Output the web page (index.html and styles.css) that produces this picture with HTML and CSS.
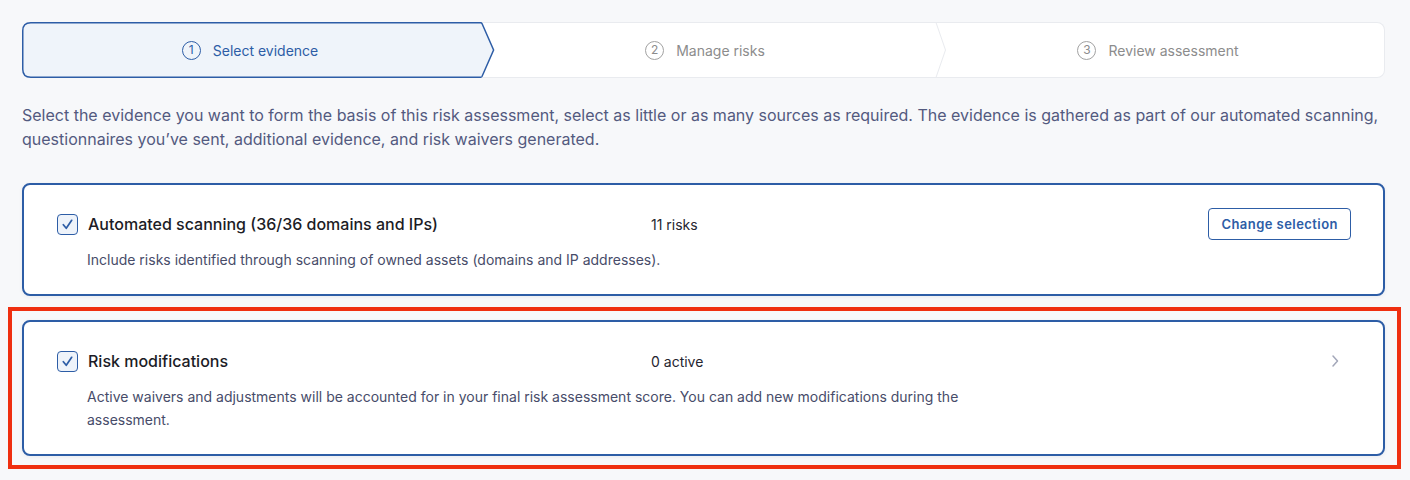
FILE: index.html
```html
<!DOCTYPE html>
<html lang="en">
<head>
    <meta charset="UTF-8">
    <meta name="viewport" content="width=device-width, initial-scale=1.0">
    <title>Risk assessment - Select evidence</title>
    <link rel="stylesheet" href="styles.css">
</head>
<body>
    <!-- Stepper -->
    <div class="stepper">
        <div class="step step-active">
            <svg class="step-shape" viewBox="0 0 459 56" preserveAspectRatio="none">
                <path d="M8.75 0.75 H458.6 Q459.6 0.75 460.1 1.8 L471.6 28 L460.1 54.2 Q459.6 55.25 458.6 55.25 H8.75 Q0.75 55.25 0.75 47.25 V8.75 Q0.75 0.75 8.75 0.75 Z" fill="#eff4fa" stroke="#2d5da6" stroke-width="1.5"/>
            </svg>
            <span class="step-num">1</span>
            <span class="step-label">Select evidence</span>
        </div>
        <div class="step step-mid">
            <svg class="step-shape" viewBox="0 0 455 56" preserveAspectRatio="none">
                <path d="M-14 0.5 H455 L464.5 28 L455 55.5 H-14 Z" fill="#ffffff"/>
                <path d="M-14 0.5 H455 L464.5 28 L455 55.5 H-14" fill="none" stroke="#e9ebef" stroke-width="1"/>
            </svg>
            <span class="step-num">2</span>
            <span class="step-label">Manage risks</span>
        </div>
        <div class="step step-last">
            <span class="step-num">3</span>
            <span class="step-label">Review assessment</span>
        </div>
    </div>

    <p class="intro">
        Select the evidence you want to form the basis of this risk assessment, select as little or as many sources as required. The evidence is gathered as part of our automated scanning, questionnaires you’ve sent, additional evidence, and risk waivers generated.
    </p>

    <!-- Evidence sources -->
    <div class="source-card">
        <div class="source-row">
            <div class="source-title">
                <span class="checkbox">
                    <svg viewBox="0 0 20 20"><path d="M5.6 10.2 L8.7 14 L14.4 5.6" fill="none" stroke="#2d5da6" stroke-width="1.8" stroke-linecap="round" stroke-linejoin="round"/></svg>
                </span>
                Automated scanning (36/36 domains and IPs)
            </div>
            <div class="source-count">11 risks</div>
            <button class="btn-outline">Change selection</button>
        </div>
        <p class="source-desc">Include risks identified through scanning of owned assets (domains and IP addresses).</p>
    </div>

    <div class="highlight">
        <div class="source-card">
            <div class="source-row">
                <div class="source-title">
                    <span class="checkbox">
                        <svg viewBox="0 0 20 20"><path d="M5.6 10.2 L8.7 14 L14.4 5.6" fill="none" stroke="#2d5da6" stroke-width="1.8" stroke-linecap="round" stroke-linejoin="round"/></svg>
                    </span>
                    Risk modifications
                </div>
                <div class="source-count">0 active</div>
                <span class="chevron">
                    <svg viewBox="0 0 24 24"><path d="M10 7 L14.5 12 L10 17" fill="none" stroke="#a3a7b9" stroke-width="1.5" stroke-linecap="round" stroke-linejoin="round"/></svg>
                </span>
            </div>
            <p class="source-desc narrow">Active waivers and adjustments will be accounted for in your final risk assessment score. You can add new modifications during the assessment.</p>
        </div>
    </div>
</body>
</html>
```

FILE: styles.css
```css
/* Reset */
* {
    margin: 0;
    padding: 0;
    box-sizing: border-box;
}

body {
    font-family: Inter, 'Noto Sans', sans-serif;
    background-color: #f7f8fa;
    color: #1d1d27;
    padding: 22px 25px 0 22px;
}

/* Stepper */
.stepper {
    display: flex;
    height: 56px;
}

.step {
    position: relative;
    display: flex;
    align-items: center;
    justify-content: center;
    gap: 12px;
    font-size: 14px;
    color: #8c8c8c;
}

.step-active {
    flex: 0 0 459px;
    padding-right: 3px;
    color: #2d5da6;
    z-index: 3;
}

.step-mid {
    flex: 0 0 455px;
    padding-right: 7px;
    z-index: 2;
}

.step-last {
    flex: 1;
    background: #fff;
    border: 1px solid #e9ebef;
    border-left: none;
    border-radius: 0 8px 8px 0;
    padding-right: 4px;
    z-index: 1;
}

/* arrow shape drawn under the label */
.step-shape {
    position: absolute;
    top: 0;
    left: 0;
    width: 100%;
    height: 100%;
    overflow: visible;
    z-index: -1;
}

.step-num {
    width: 19px;
    height: 19px;
    border: 1px solid currentColor;
    border-radius: 50%;
    display: flex;
    align-items: center;
    justify-content: center;
    font-size: 12px;
    line-height: 1;
}

.step-mid .step-num,
.step-last .step-num {
    border-color: #a2a2a2;
}

/* Intro text */
.intro {
    margin: 25px 0 32px;
    font-size: 16px;
    line-height: 24px;
    color: #535a7f;
}

/* Source cards */
.source-card {
    background: #fff;
    border: 2px solid #2d5da6;
    border-radius: 8px;
    padding: 23px 32px 23px 33px;
    box-shadow: 0 1px 4px rgba(20, 30, 60, 0.06);
}

.source-row {
    display: grid;
    grid-template-columns: 594px 1fr auto;
    align-items: center;
    min-height: 32px;
}

.source-title {
    display: flex;
    align-items: center;
    gap: 10px;
    font-size: 16px;
    font-weight: 500;
    color: #1c1c26;
}

.checkbox {
    width: 21px;
    height: 21px;
    border: 1.5px solid #2d5da6;
    border-radius: 4px;
    background: #eef3fa;
    display: flex;
}

.checkbox svg {
    width: 100%;
    height: 100%;
}

.source-count {
    font-size: 14px;
    color: #25252f;
}

.btn-outline {
    font-family: inherit;
    height: 32px;
    padding: 0 12px;
    background: #fff;
    border: 1px solid #2d5da6;
    border-radius: 4px;
    color: #2d5da6;
    font-size: 13px;
    font-weight: 600;
    letter-spacing: 0.45px;
    cursor: pointer;
}

.chevron {
    width: 24px;
    height: 24px;
    margin-right: 4px;
    display: flex;
}

.chevron svg {
    width: 100%;
    height: 100%;
}

.source-desc {
    margin: 8px 0 0 30px;
    font-size: 14px;
    line-height: 23px;
    color: #474c69;
}

.source-desc.narrow {
    max-width: 880px;
}

/* Red highlight around the second card */
.highlight {
    margin: 11px -16px 0 -14px;
    padding: 9px 12px 9px 10px;
    border: 4px solid #ef2f10;
}
```
